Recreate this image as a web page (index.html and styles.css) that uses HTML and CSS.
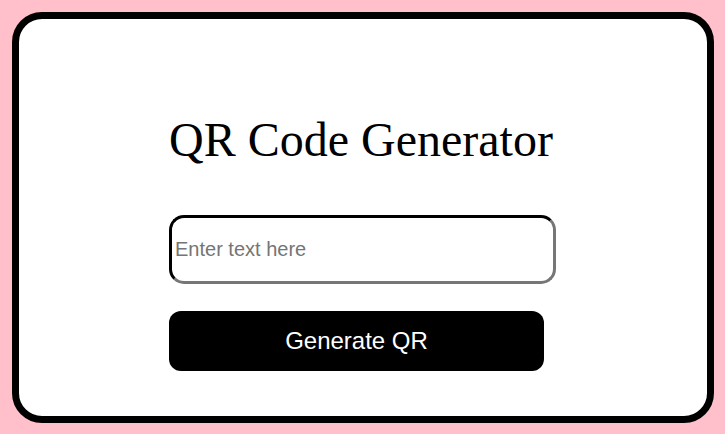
FILE: index.html
```html
<!DOCTYPE html>
<html>
<head>
<meta charset="utf-8">
<link rel="stylesheet" href="styles.css">
</head>
<body>
<div class="card">
  <div class="box">
    <h1 class="title">QR Code Generator</h1>
    <input class="field" type="text" placeholder="Enter text here">
    <button class="btn">Generate QR</button>
  </div>
</div>
</body>
</html>
```
FILE: styles.css
```css
html, body { margin: 0; padding: 0; }
body {
  background: #ffc0cb;
  padding: 12px 11px 11px 12px;
  height: 434px;
  box-sizing: border-box;
}
.card {
  box-sizing: border-box;
  height: 411px;
  background: #fff;
  border: 7px solid #000;
  border-radius: 30px;
  display: flex;
  justify-content: center;
  padding-right: 1px;
}
.box {
  width: 387px;
  display: flex;
  flex-direction: column;
  align-items: flex-start;
  padding-top: 93px;
}
.title {
  margin: 0;
  font-family: "Liberation Serif", serif;
  font-weight: normal;
  font-size: 48px;
  line-height: 56px;
}
.field {
  box-sizing: border-box;
  margin-top: 47px;
  width: 387px;
  height: 69px;
  border: 3px inset #767676;
  border-top-color: #222;
  border-left-color: #222;
  border-radius: 15px;
  padding: 0 3px;
  font-family: "Liberation Sans", Arial, sans-serif;
  font-size: 20px;
  outline: none;
}
.field::placeholder { color: #757575; }
.btn {
  box-sizing: border-box;
  margin-top: 27px;
  width: 375px;
  height: 60px;
  background: #000;
  color: #fff;
  border: none;
  border-radius: 12px;
  font-family: "Liberation Sans", Arial, sans-serif;
  font-size: 24px;
  cursor: pointer;
}
```
